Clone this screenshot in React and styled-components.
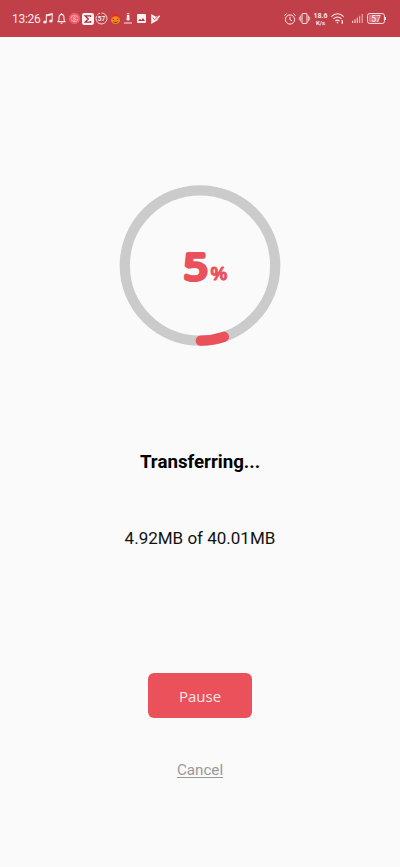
import React from 'react'
import styled, { createGlobalStyle } from 'styled-components';

const GlobalStyle=createGlobalStyle`
  *{
    box-sizing:border-box;
  }
  body{
    margin:0;
    background-color:#fafafa;
    font-family:Roboto, "Liberation Sans", sans-serif;
  }
`;

const Screen=styled.div`
  display:flex;
  flex-direction:column;
  width:100%;
  height:867px;
  overflow:hidden;
  background-color:#fafafa;
`;

const StatusBar=styled.header`
  display:flex;
  align-items:center;
  justify-content:space-between;
  flex:none;
  height:37px;
  padding:0 14px 0 12px;
  background-color:#c03f48;
  color:#fbe9ea;
`;

const StatusGroup=styled.div`
  display:flex;
  align-items:center;
`;

const Clock=styled.span`
  width:29px;
  font-size:12px;
  line-height:14px;
  letter-spacing:-0.3px;
`;

const Icon=styled.svg`
  display:block;
  flex:none;
  margin-left:${(props)=>props.$gap || 0}px;
  overflow:visible;
`;

const Speed=styled.div`
  display:flex;
  flex-direction:column;
  align-items:center;
  width:14px;
  margin-left:4px;
  font-size:7px;
  font-weight:700;
  line-height:8px;
`;

const Unit=styled.div`
  margin-top:-1px;
  font-size:6px;
  line-height:7px;
`;

const Main=styled.main`
  display:flex;
  flex:1;
  flex-direction:column;
  align-items:center;
  padding-top:148px;
`;

const Progress=styled.div`
  display:grid;
  place-items:center;
  width:162px;
  height:161px;

  & > *{
    grid-area:1 / 1;
  }
`;

const Ring=styled.svg`
  display:block;
`;

const Percent=styled.svg`
  display:block;
  margin-left:12px;
  overflow:visible;
  fill:#ea515b;
  stroke:#ea515b;
  stroke-linejoin:round;
  font-family:"Open Sans", sans-serif;
`;

const Title=styled.h1`
  margin:104px 0 0;
  font-size:18.7px;
  font-weight:700;
  line-height:24px;
  color:#000;
`;

const Amount=styled.p`
  margin:52px 0 0;
  font-size:17px;
  line-height:24px;
  color:#111;
`;

const PauseButton=styled.button`
  width:104px;
  height:45px;
  margin-top:123px;
  padding:1px 0 0;
  border:none;
  border-radius:6px;
  background-color:#ea515b;
  color:#fde6e8;
  font-family:"Open Sans", sans-serif;
  font-size:15px;
  font-weight:400;
`;

const CancelButton=styled.button`
  margin-top:42px;
  padding:0;
  border:none;
  background:none;
  color:#999;
  font-family:Roboto, sans-serif;
  font-size:15.2px;
  line-height:20px;
  text-decoration:underline;
  text-underline-offset:2px;
  text-decoration-thickness:1px;
`;

const Notifications = () => (
  <>
    <Icon $gap={2} width="10" height="11" viewBox="0 0 10 11" fill="currentColor">
      <path d="M3 1.5 9.5 0v1.9L3 3.4z" />
      <path d="M3.3 1.5v7M9.2.5v7" stroke="currentColor" strokeWidth="1" />
      <ellipse cx="2" cy="8.9" rx="1.8" ry="1.5" />
      <ellipse cx="7.9" cy="7.9" rx="1.8" ry="1.5" />
    </Icon>
    <Icon $gap={4} width="9" height="11" viewBox="0 0 9 11" fill="none" stroke="currentColor" strokeWidth="1.1">
      <path d="M.4 8.6h8.2M1.4 8.4c.5-.6.6-1.5.6-3.5C2 2.7 2.9 1.4 4.5 1.4S7 2.7 7 4.9c0 2 .1 2.9.6 3.5M4.5 0v1.4M3.5 10.3h2" />
    </Icon>
    <Icon $gap={2.5} width="11" height="11" viewBox="0 0 11 11">
      <circle cx="5.5" cy="5.5" r="5.7" fill="#ee5a66" />
      <path d="M2.2 5.3c0-2.3 2-3.2 3.5-3s2.8 1 3 2.3M8.9 5.7c0 2.3-2 3.2-3.5 3s-2.8-1-3-2.3M7 4.2c-1.7-.8-3 .1-2.8.9.2.9 2.5.2 2.7 1.2.1.9-1.6 1.2-2.9.4" fill="none" stroke="#ffdada" strokeWidth=".7" />
    </Icon>
    <Icon $gap={2} width="12" height="12" viewBox="0 0 12 12">
      <rect width="12" height="12" rx="2.3" fill="#fff4f4" />
      <path d="M8.6 4V2.9H3.3L6.3 6 3.3 9.1h5.3V8" fill="none" stroke="#a8323c" strokeWidth="1.4" />
    </Icon>
    <Icon $gap={2.5} width="11" height="11" viewBox="0 0 11 11">
      <path d="M5.5 0a5.5 5.5 0 1 1-5 3.2M1.3 2A5.5 5.5 0 0 1 4 .2" fill="none" stroke="currentColor" strokeWidth=".9" />
      <text x="5.5" y="7.9" textAnchor="middle" fontSize="6.6" fontWeight="700" fill="currentColor">57</text>
    </Icon>
    <Icon $gap={3.5} width="9" height="11" viewBox="0 0 9 11">
      <path d="M4.2-1c.2 1.3 1.3 2.2 1.8 3.4l1-.8c.1 1 .5 1.9.9 2.9H1c0-1.3.5-1.9 1-2.4l.8.8C3.4 1.6 4.2.6 4.2-1z" fill="#ef2416" />
      <ellipse cx="4.5" cy="7.2" rx="4.5" ry="3.9" fill="#f08a1e" />
      <path d="m1.6 5.6 1.9.9-1.6.5zM7.4 5.6l-1.9.9 1.6.5zM1.8 8.2c1.6.9 3.8.9 5.4 0-.8 2.2-4.5 2.3-5.4 0z" fill="#8c2a15" />
    </Icon>
    <Icon $gap={4} width="8" height="11" viewBox="0 0 8 11" fill="currentColor">
      <path d="M2.8.2h2.6v1.1H2.8zM2.8 2h2.6v3.7h1.1L4.1 8.1 1.7 5.7h1.1zM0 9.5h8v1.1H0z" />
    </Icon>
    <Icon $gap={5} width="9" height="9" viewBox="0 0 9 9">
      <rect width="9" height="9" rx="1" fill="#fff1f1" />
      <path d="m1.2 7 1.7-2.3 1.3 1.5L5.9 4l2.1 3z" fill="#a9363f" />
    </Icon>
    <Icon $gap={5} width="9" height="10" viewBox="0 0 9 10">
      <path d="M.2 0 5 2.7 8.2 1 9 2.5 6 5.9 8.4 5.2.2 10z" fill="#fff1f1" />
      <path d="m1.7 3.6 2 2.1L8.3.9" fill="none" stroke="#c03f48" strokeWidth=".9" />
    </Icon>
  </>
);

const SystemIcons = () => (
  <>
    <Icon width="12" height="12" viewBox="0 0 12 12" fill="none" stroke="currentColor">
      <circle cx="6" cy="6.5" r="4.6" />
      <path d="M6 3.7v3l2 1.2M.4 2.6 2.7.6M11.6 2.6 9.3.6" />
    </Icon>
    <Icon $gap={3} width="11" height="11" viewBox="0 0 11 11" fill="none" stroke="currentColor">
      <rect x="3" y=".6" width="5" height="9.8" rx=".5" />
      <path d="M1.5 2.5v6M.3 3.8v3.4M9.5 2.5v6M10.7 3.8v3.4" strokeWidth=".7" />
    </Icon>
    <Speed>
      <span>18.6</span>
      <Unit>K/s</Unit>
    </Speed>
    <Icon $gap={3} width="13" height="11" viewBox="0 0 13 11" fill="none" stroke="currentColor" strokeWidth="1.1">
      <path d="M.4 3.7C4-.2 9-.2 12.6 3.7M2.4 6c2.4-2.6 5.8-2.6 8.2 0M4.4 8.1c1.3-1.3 2.9-1.3 4.2 0" />
      <circle cx="6.5" cy="9.6" r=".8" fill="currentColor" stroke="none" />
      <path d="M11.3 7.2v3.6" strokeWidth="1.4" />
    </Icon>
    <Icon $gap={8} width="11" height="9" viewBox="0 0 11 9" fill="none" stroke="currentColor">
      <path d="M.7 6.8V9M3 5.3V9M5.3 3.6V9" />
      <path d="M7.7 1.8V9M10.2 0v9" opacity=".75" />
    </Icon>
    <Icon $gap={4.5} width="19" height="11" viewBox="0 0 19 11">
      <rect x=".6" y=".6" width="16.8" height="9.8" rx="2" fill="none" stroke="currentColor" />
      <path d="M18.5 4v3" stroke="currentColor" />
      <rect x="2" y="2" width="9.5" height="7" rx=".7" fill="#d9777f" />
      <text x="9" y="8.5" textAnchor="middle" fontSize="8.5" fill="#fff4f4">57</text>
    </Icon>
  </>
);

const ProgressRing = ({percent}) => {
  const radius=75.2;
  const length=2*Math.PI*radius;

  return (
    <Progress>
      <Ring width="162" height="161" viewBox="-81 -80.5 162 161" fill="none" strokeWidth="10.3">
        <circle r={radius} stroke="#cbcbcb" />
        <circle
          r={radius}
          stroke="#ea515b"
          strokeLinecap="round"
          strokeDasharray={`${length*percent/100} ${length}`}
          transform="rotate(89.4) scale(1 -1)"
        />
      </Ring>
      <Percent width="44" height="56" viewBox="0 0 44 56">
        <text x="-.2" y="42" fontSize="36" strokeWidth="4.2" transform="scale(1.16 1)">{percent}</text>
        <text x="24.4" y="41.8" fontSize="18.5" fontWeight="600" strokeWidth=".9" transform="scale(1.08 1)">%</text>
      </Percent>
    </Progress>
  );
}

const App = () => {
  return (
    <Screen>
      <GlobalStyle />
      <StatusBar>
        <StatusGroup>
          <Clock>13:26</Clock>
          <Notifications />
        </StatusGroup>
        <StatusGroup>
          <SystemIcons />
        </StatusGroup>
      </StatusBar>
      <Main>
        <ProgressRing percent={5} />
        <Title>Transferring...</Title>
        <Amount>4.92MB of 40.01MB</Amount>
        <PauseButton>Pause</PauseButton>
        <CancelButton>Cancel</CancelButton>
      </Main>
    </Screen>
  );
}

export default App
